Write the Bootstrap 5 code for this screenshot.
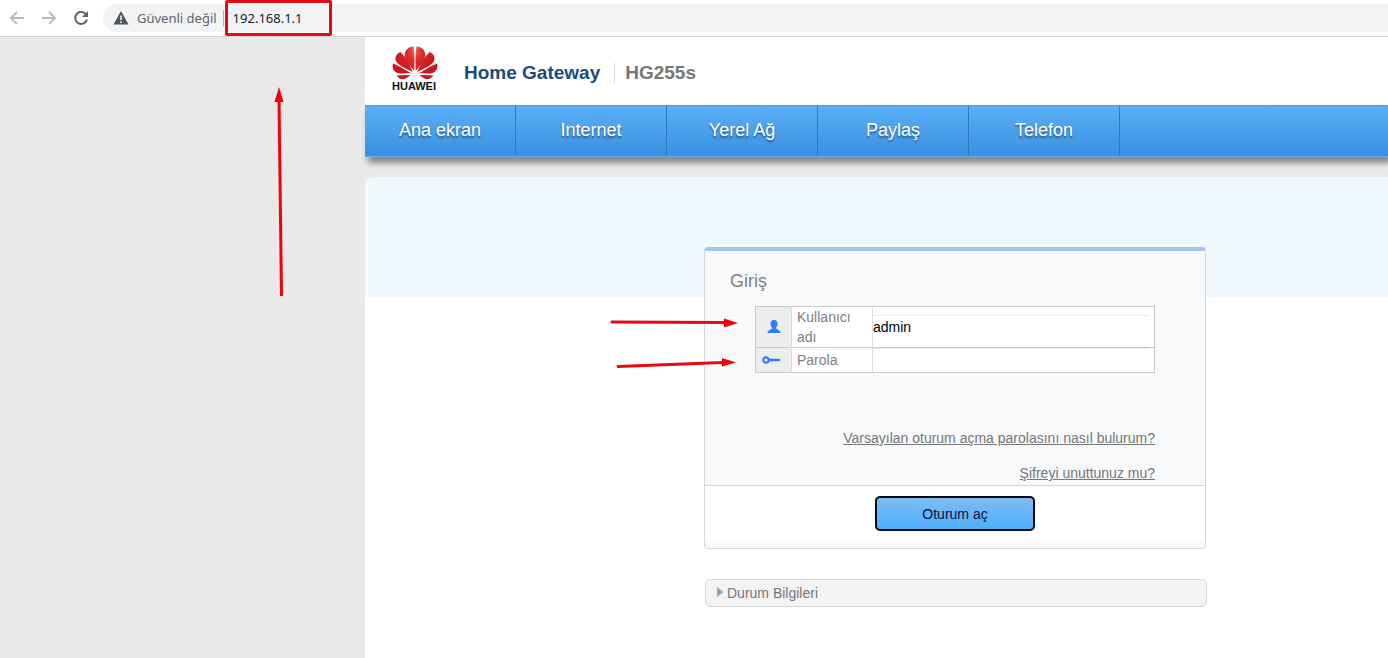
<!DOCTYPE html>
<html lang="tr">
<head>
<meta charset="utf-8">
<meta name="viewport" content="width=device-width, initial-scale=1">
<title>Home Gateway HG255s</title>
<link href="https://cdn.jsdelivr.net/npm/bootstrap@5.3.0/dist/css/bootstrap.min.css" rel="stylesheet">
<style>
  body { font-family: "Liberation Sans", Arial, sans-serif; font-size: 14px; line-height: 20px; color: #808080; background: #fff; }
  .browser-bar { height: 37px; padding-left: 9px; border-bottom: 1px solid #d5d5d5; font-family: "Noto Sans", sans-serif; font-size: 13px; color: #5f6368; }
  .tool-btn { width: 16px; height: 16px; margin-right: 16px; }
  .omnibox { height: 28px; padding-left: 10px; margin-left: -2px; background: #f1f3f4; border-radius: 14px 0 0 14px; }
  .omnibox input { width: 107px; height: 36px; padding: 0 5px; border: 3px solid #e30b13; border-radius: 2px; background: transparent; color: #202124; font-size: 13px; outline: 0; }
  .omnibox label { margin: 0 6px 0 8px; }
  .url-split { width: 1px; height: 16px; background: #b0b3b6; margin-right: 1px; }
  .gutter { width: 365px; background: #e9e9e9; }
  .annot { position: absolute; overflow: visible; pointer-events: none; }
  .annot-up { left: 272px; top: 50px; }
  .annot-user { left: -96px; top: 64px; }
  .annot-pass { left: -90px; top: 103px; }
  .brand-row { height: 68px; padding-left: 27px; background: #fff; }
  .brand-logo { margin-right: 26px; margin-bottom: 7px; }
  .brand-name { font-size: 19px; line-height: 24px; font-weight: 700; color: #1b4b7c; }
  .model-name { color: #777; border-left: 1px solid #d8d8d8; margin-left: 14px; padding-left: 10px; line-height: 20px; }
  .main-menu { height: 52px; background: linear-gradient(#5ab1f6, #3c8fe1); border-top: 1px solid #5e98c8; border-bottom: 1px solid #6aacea; box-shadow: 3px 6px 6px rgba(0,0,0,.42); }
  .main-menu a { width: 151px; border-right: 1px solid #2a7ac8; color: #fff; font-size: 18px; line-height: 48px; text-align: center; text-decoration: none; text-shadow: 0 2px 2px rgba(0,0,0,.45); }
  .menu-gap { height: 20px; background: #e9e9e9; }
  .stage { background: #e9e9e9; }
  .stage-inner { background: linear-gradient(#f1f9ff 120px, #fff 120px); border-top-left-radius: 8px; padding: 70px 0 51px 339px; }
  .login-box { width: 502px; border: 1px solid #d4d7dc; border-top: 4px solid #a3c6ea; border-radius: 4px; background: #f8f9fb; }
  .login-body { padding: 20px 50px 2px; }
  .login-title { font-size: 18px; line-height: 20px; margin: 0 0 15px -25px; color: #808080; }
  .field-grid { width: 400px; border: 1px solid #c9c9c9; background: #fff; }
  .field-grid td, .field-grid th { padding: 0; }
  .field-grid tr + tr { border-top: 1px solid #c9c9c9; }
  .field-icon { width: 36px; background: #ededed; border-right: 1px solid #dedede; }
  .field-icon svg { display: block; margin-left: 6px; }
  .field-grid th { width: 81px; padding: 0 5px; font-weight: 400; border-right: 1px solid #dedede; }
  .field-grid tr:first-child { height: 41px; }
  .field-grid tr:last-child { height: 24px; }
  .field-grid input { display: block; width: 276px; height: 24px; padding: 0 0 1px; border: 0; border-top: 1px solid #ececec; background: #fff; color: #000; outline: 0; }
  .help-links { padding-top: 55px; gap: 15px; }
  .help-links a { color: #777; line-height: 20px; }
  .login-foot { background: #fff; border-top: 1px solid #d4d7dc; border-bottom: 7px solid #f8f9fb; padding: 10px 0; border-radius: 0 0 4px 4px; }
  .login-btn { width: 160px; height: 35px; border: 2px solid #050a14; border-radius: 5px; background: linear-gradient(#7ebcf0, #4fafff); color: #06103a; font-size: 14px; padding: 0; }
  .status-bar { width: 502px; height: 28px; margin: 30px 0 0 1px; padding: 0 11px; border: 1px solid #d4d7d8; border-radius: 5px; background: #f3f3f3; color: #777; font-size: 14px; gap: 3px; }
</style>
</head>
<body class="min-vh-100 d-flex flex-column overflow-x-hidden">
<header class="browser-bar d-flex align-items-center">
  <button type="button" class="tool-btn btn p-0 border-0 d-flex" aria-label="Geri"><svg width="16" height="16" fill="none" stroke="#b9bbbd" stroke-width="2"><path d="M15 8H2M8 2L2 8l6 6"/></svg></button>
  <button type="button" class="tool-btn btn p-0 border-0 d-flex" aria-label="İleri"><svg width="16" height="16" fill="none" stroke="#b9bbbd" stroke-width="2"><path d="M1 8h13M8 2l6 6-6 6"/></svg></button>
  <button type="button" class="tool-btn btn p-0 border-0 d-flex me-3" aria-label="Yenile"><svg width="16" height="16" fill="none" stroke="#5f6368" stroke-width="2"><path d="M13.3 4.6A6 6 0 1 0 14 9.6"/><path d="M15 1v6H9z" fill="#5f6368" stroke="none"/></svg></button>
  <div class="omnibox d-flex align-items-center flex-grow-1">
    <svg width="16" height="14"><path d="M8 0l7.500 13.500H.5z" fill="#505357"/><path d="M7.200 4.500h1.600v4.500H7.200zM7.200 10.300h1.600v1.600H7.200z" fill="#f1f3f4"/></svg>
    <label for="address">Güvenli değil</label>
    <span class="url-split"></span>
    <input id="address" type="text" value="192.168.1.1">
  </div>
</header>

<div class="d-flex flex-grow-1 position-relative">
  <aside class="gutter flex-shrink-0"></aside>
  <svg class="annot annot-up" width="14" height="210"><path d="M7 12L9.500 209" stroke="#f40008" stroke-width="3"/><path d="M7 0l4.500 15h-9z" fill="#f40008"/></svg>
  <main class="flex-grow-1 d-flex flex-column">
    <div class="brand-row d-flex align-items-center">
      <svg width="46" height="48" viewBox="0 0 46 48" role="img" aria-label="Huawei" class="brand-logo flex-shrink-0">
        <defs>
          <radialGradient id="petal" gradientUnits="userSpaceOnUse" cx="27" cy="6" r="25"><stop offset="0" stop-color="#ee8a68"/><stop offset=".45" stop-color="#d9302c"/><stop offset="1" stop-color="#c9151e"/></radialGradient>
          <g id="wing">
            <path d="M22.200 27C22.600 18 22.800 9 21.400 2.500C17 2.500 12.500 6 12.700 11C13 17 18.500 22 22.200 27z"/>
            <path d="M20.800 28C17.300 20 14 13 8.300 8C4.500 9.500 2.500 13.500 4 17C6.500 22 14 24.500 20.800 28z"/>
            <path d="M19.500 29.400C13 26 7 21.500 1 19.500C-.3 24 1.500 28 5.500 29C9.500 30 14 29.200 19.500 29.400z"/>
            <path d="M18.700 31C13.500 30.700 9 31.200 4.500 31.500C7 35 10.500 36 13.500 34.500C15.500 33.500 17 32.300 18.700 31z"/>
          </g>
        </defs>
        <g fill="url(#petal)"><use href="#wing"/><use href="#wing" transform="matrix(-1 0 0 1 46 0)"/></g>
        <text x="0" y="46" font-family="Liberation Sans, Arial, sans-serif" font-size="11" font-weight="700" fill="#111">HUAWEI</text>
      </svg>
      <h1 class="brand-name m-0 d-flex align-items-center pt-1">Home Gateway <span class="model-name">HG255s</span></h1>
    </div>
    <nav class="main-menu d-flex position-relative">
      <a href="#">Ana ekran</a><a href="#">Internet</a><a href="#">Yerel Ağ</a><a href="#">Paylaş</a><a href="#">Telefon</a>
    </nav>
    <div class="menu-gap"></div>
    <div class="stage flex-grow-1 d-flex flex-column">
      <section class="stage-inner flex-grow-1">
        <form class="login-box position-relative">
          <svg class="annot annot-user" width="130" height="14"><path d="M3 7L116 7.500" stroke="#e20c12" stroke-width="3" stroke-linecap="round"/><path d="M129 8l-14 4.500V3.500z" fill="#f40008"/></svg>
          <svg class="annot annot-pass" width="122" height="14"><path d="M3 12.500L108 8.500" stroke="#e20c12" stroke-width="3" stroke-linecap="round"/><path d="M121 8.500l-14 4V4z" fill="#f40008"/></svg>
          <div class="login-body">
            <h2 class="login-title">Giriş</h2>
            <table class="field-grid">
              <tr>
                <td class="field-icon"><svg width="24" height="14"><path d="M12 0c2.600 0 3.600 1.800 3.500 4C15.400 6 14.500 7 14 8.200c.3 1.500 4.500 1.300 4.500 4.800h-13c0-3.500 4.200-3.300 4.500-4.800C9.500 7 8.600 6 8.500 4 8.400 1.800 9.400 0 12 0z" fill="#2f7df0"/></svg></td>
                <th scope="row"><label for="user">Kullanıcı adı</label></th>
                <td><input id="user" type="text" value="admin"></td>
              </tr>
              <tr>
                <td class="field-icon"><svg width="24" height="10"><circle cx="4" cy="5" r="2.700" fill="#fff" stroke="#2f7df0" stroke-width="2.200"/><path d="M7 5h10" stroke="#2f7df0" stroke-width="2.600" stroke-linecap="round"/></svg></td>
                <th scope="row"><label for="pass">Parola</label></th>
                <td><input id="pass" type="password"></td>
              </tr>
            </table>
            <div class="help-links d-flex flex-column align-items-end">
              <a href="#">Varsayılan oturum açma parolasını nasıl bulurum?</a>
              <a href="#">Şifreyi unuttunuz mu?</a>
            </div>
          </div>
          <div class="login-foot d-flex justify-content-center">
            <button type="button" class="login-btn">Oturum aç</button>
          </div>
        </form>
        <button type="button" class="status-bar d-flex align-items-center">
          <svg width="7" height="14" class="flex-shrink-0"><path d="M0 1l6.500 5L0 11z" fill="#8fa9b5"/></svg><span>Durum Bilgileri</span>
        </button>
      </section>
    </div>
  </main>
</div>
<script src="https://cdn.jsdelivr.net/npm/bootstrap@5.3.0/dist/js/bootstrap.bundle.min.js"></script>
</body>
</html>
